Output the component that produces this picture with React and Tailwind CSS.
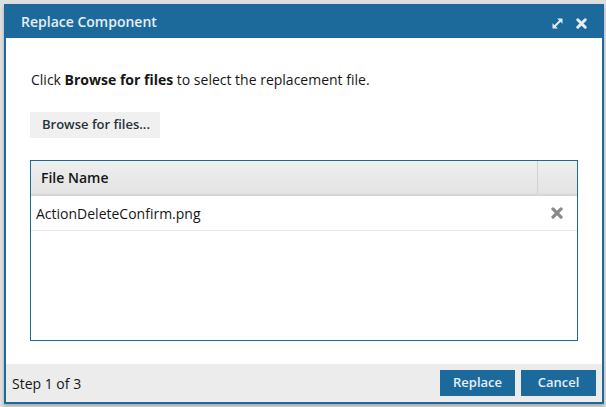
import { useState } from 'react'

const BLUE = 'bg-[#1c6a9c]'

function ExpandIcon() {
  return (
    <svg width="11" height="11" viewBox="0 0 11 11" className="text-[#dfe9f1]">
      <path d="M2.5 8.5 L8.5 2.5" stroke="currentColor" strokeWidth="2" />
      <path d="M5.2 0.5 H10.5 V5.8 Z" fill="currentColor" />
      <path d="M0.5 5.2 V10.5 H5.8 Z" fill="currentColor" />
    </svg>
  )
}

function CloseIcon({ className, size = 11 }) {
  return (
    <svg width={size} height={size} viewBox="0 0 11 11" className={className}>
      <path d="M1.8 1.8 L9.2 9.2 M9.2 1.8 L1.8 9.2" stroke="currentColor" strokeWidth="3" strokeLinecap="round" />
    </svg>
  )
}

export default function App() {
  const [files, setFiles] = useState(['ActionDeleteConfirm.png'])

  return (
    <div className="w-[606px] h-[407px] bg-[#dedede] pt-1 pl-1 font-['Open_Sans',sans-serif] text-[#161616]">
      <div className="w-[600px] h-[400px] border-2 border-[#1c6a9c] flex flex-col bg-white shadow-[0_2px_3px_rgba(0,0,0,0.25)]">
        {/* Title bar */}
        <div className={`${BLUE} h-[32px] shrink-0 flex items-center justify-between pl-[15px] pr-[15px]`}>
          <span className="text-[14px] font-semibold text-[#e6eef4] leading-none">Replace Component</span>
          <div className="flex items-center gap-[13px] mt-[2px]">
            <ExpandIcon />
            <CloseIcon className="text-[#e6eef4]" />
          </div>
        </div>

        {/* Body */}
        <div className="flex-1 px-6 pt-[32px]">
          <p className="text-[14px] leading-[20px] pl-px">
            Click <span className="font-bold">Browse for files</span> to select the replacement file.
          </p>
          <button className="mt-[22px] h-[26px] w-[130px] bg-[#f0f0f0] text-[13px] font-semibold text-[#26323d] text-left pl-[12px]">
            Browse for files...
          </button>

          <div className="mt-[22px] h-[181px] border border-[#1c6a9c]">
            <div className="flex h-[35px] bg-gradient-to-b from-[#efefef] to-[#e3e3e3] border-b-2 border-[#d6d6d6]">
              <div className="flex-1 flex items-center pl-[10px] text-[14px] font-semibold">File Name</div>
              <div className="w-[40px] border-l border-[#d2d2d2]" />
            </div>
            {files.map((f) => (
              <div key={f} className="flex h-[35px] border-b border-[#e6e6e6]">
                <div className="flex-1 flex items-center pl-[5px] text-[14px]">{f}</div>
                <button
                  onClick={() => setFiles(files.filter((x) => x !== f))}
                  className="w-[40px] flex items-center justify-center"
                >
                  <CloseIcon className="text-[#8a8a8a]" size={12} />
                </button>
              </div>
            ))}
          </div>
        </div>

        {/* Footer */}
        <div className="h-[38px] shrink-0 bg-[#ececec] flex items-center justify-between pl-[6px] pr-[6px]">
          <span className="text-[14px]">Step 1 of 3</span>
          <div className="flex gap-[6px]">
            <button className={`${BLUE} w-[75px] h-[26px] text-[13px] font-semibold text-[#e6eef4]`}>Replace</button>
            <button className={`${BLUE} w-[75px] h-[26px] text-[13px] font-semibold text-[#e6eef4]`}>Cancel</button>
          </div>
        </div>
      </div>
    </div>
  )
}
